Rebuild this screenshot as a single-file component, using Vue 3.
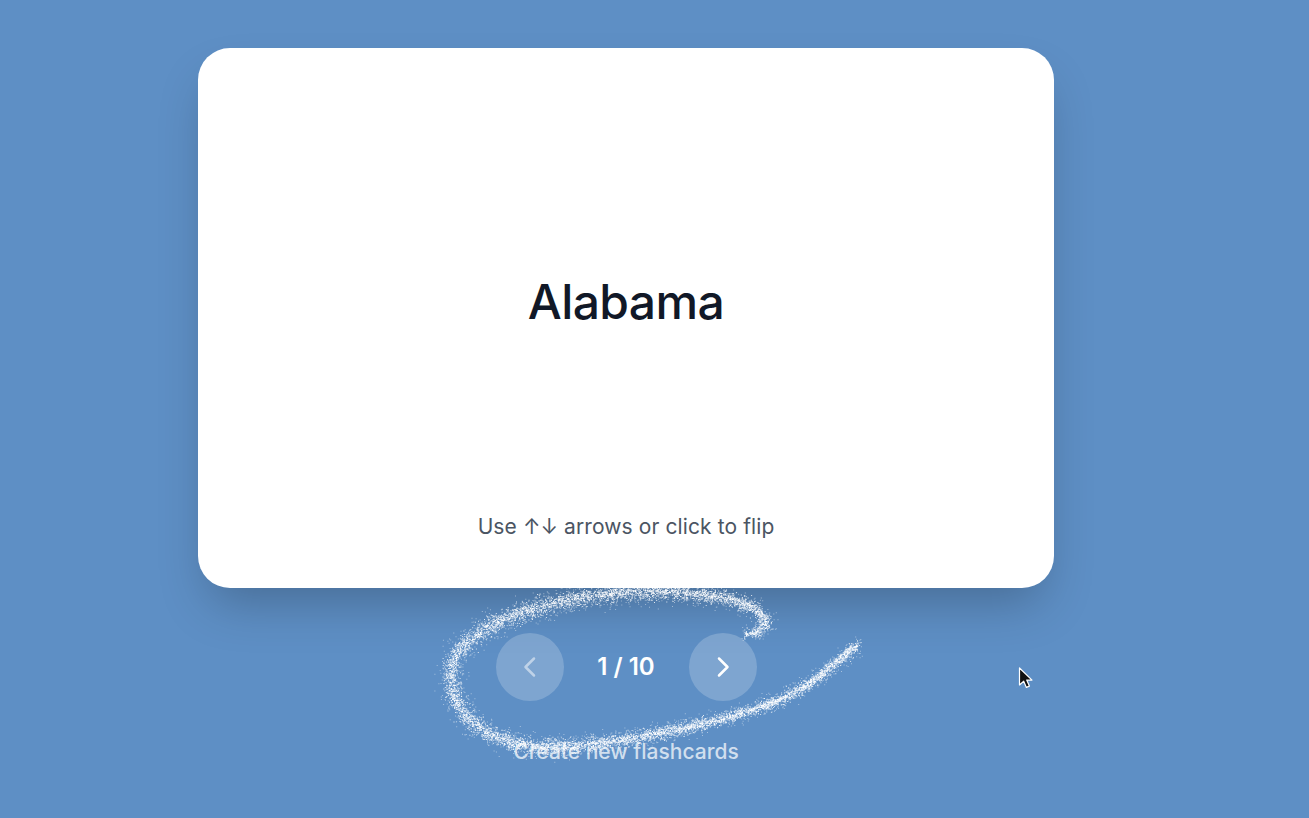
<script setup>
import { computed } from 'vue'

const anchors = [
  [747, 634], [760, 629], [765, 621], [750, 606], [713, 596], [663, 591], [613, 593],
  [563, 601], [513, 615], [480, 632], [460, 649], [451, 672], [456, 699], [470, 720],
  [499, 738], [540, 746], [590, 744], [647, 735], [713, 721], [780, 699], [820, 675], [856, 645],
]

function buildSpeckle(density, spread) {
  let seed = 12345
  const rnd = () => {
    seed = (seed * 1664525 + 1013904223) >>> 0
    return seed / 4294967296
  }
  const gauss = () => (rnd() + rnd() + rnd() - 1.5) / 1.5
  const at = (i) => anchors[Math.max(0, Math.min(anchors.length - 1, i))]
  let d = ''
  for (let i = 0; i < anchors.length - 1; i++) {
    const [p0, p1, p2, p3] = [at(i - 1), at(i), at(i + 1), at(i + 2)]
    const len = Math.hypot(p2[0] - p1[0], p2[1] - p1[1])
    const count = Math.round(len * density)
    for (let n = 0; n < count; n++) {
      const t = rnd()
      const c = (k) =>
        0.5 * (2 * p1[k] + (p2[k] - p0[k]) * t +
          (2 * p0[k] - 5 * p1[k] + 4 * p2[k] - p3[k]) * t * t +
          (3 * p1[k] - p0[k] - 3 * p2[k] + p3[k]) * t * t * t)
      const progress = (i + t) / (anchors.length - 1)
      const taper = 0.75 + 0.5 * Math.sin(Math.min(1, progress * 1.1) * Math.PI)
      const x = c(0) + gauss() * spread * taper
      const y = c(1) + gauss() * spread * taper
      d += `M${x.toFixed(1)} ${y.toFixed(1)}h1v1h-1z`
    }
  }
  return d
}

const speckleBright = computed(() => buildSpeckle(2, 6))
const speckleCore = computed(() => buildSpeckle(6, 11))
const speckleHaze = computed(() => buildSpeckle(4, 17))
</script>

<template>
  <main class="page">
    <section class="card">
      <div class="face">
        <h1 class="word">Alabama</h1>
      </div>
      <p class="hint">Use ↑↓ arrows or click to flip</p>
    </section>

    <div class="controls">
      <button class="nav nav-off" type="button" aria-label="Previous">
        <svg width="24" height="24" viewBox="0 0 24 24" fill="none" stroke="currentColor" stroke-width="2.5" stroke-linecap="round" stroke-linejoin="round"><path d="M16 3.5L7.5 12l8.5 8.5" /></svg>
      </button>
      <span class="count">1 / 10</span>
      <button class="nav" type="button" aria-label="Next">
        <svg width="24" height="24" viewBox="0 0 24 24" fill="none" stroke="currentColor" stroke-width="2.5" stroke-linecap="round" stroke-linejoin="round"><path d="M8 3.5l8.5 8.5L8 20.5" /></svg>
      </button>
    </div>

    <a class="create">Create new flashcards</a>

    <svg class="scribble" width="1309" height="818" viewBox="0 0 1309 818" aria-hidden="true">
      <path :d="speckleHaze" fill="#fff" fill-opacity="0.45" />
      <path :d="speckleCore" fill="#fff" fill-opacity="0.8" />
      <path :d="speckleBright" fill="#fff" />
    </svg>

    <svg class="cursor" width="16" height="24" viewBox="0 0 16 24" aria-hidden="true">
      <path d="M1.5 1v17l4.2-3.8 2.7 6.2 3-1.3-2.7-6H14z" fill="#111" stroke="#fff" stroke-width="1.2" stroke-linejoin="round" />
    </svg>
  </main>
</template>

<style scoped>
.page {
  position: relative;
  box-sizing: border-box;
  width: 1309px;
  height: 818px;
  overflow: hidden;
  padding: 48px 255px 0 198px;
  background: #5e8fc5;
  display: flex;
  flex-direction: column;
  align-items: center;
  font-family: Inter, "Liberation Sans", sans-serif;
}
.card {
  box-sizing: border-box;
  width: 856px;
  height: 540px;
  flex: none;
  display: flex;
  flex-direction: column;
  padding: 40px 0 49px;
  background: #fff;
  border-radius: 32px;
  box-shadow: 0 25px 50px -12px rgba(0, 0, 0, 0.25);
}
.face {
  flex: 1;
  display: flex;
  align-items: center;
  justify-content: center;
}
.word {
  margin: 0;
  font-size: 48px;
  line-height: 1;
  font-weight: 500;
  letter-spacing: -0.6px;
  color: #111827;
}
.hint {
  margin: 0;
  font-size: 21px;
  line-height: 24px;
  letter-spacing: 0.1px;
  text-align: center;
  color: #4b5563;
}
.controls {
  margin-top: 45px;
  display: flex;
  align-items: center;
  gap: 32px;
}
.nav {
  width: 68px;
  height: 68px;
  padding: 0;
  border: 0;
  border-radius: 50%;
  display: flex;
  align-items: center;
  justify-content: center;
  background: rgba(255, 255, 255, 0.2);
  color: #fff;
}
.nav-off {
  color: rgba(255, 255, 255, 0.5);
}
.count {
  min-width: 61px;
  font-size: 24px;
  line-height: 28px;
  font-weight: 600;
  text-align: center;
  color: #fff;
}
.create {
  margin-top: 37px;
  font-size: 21px;
  line-height: 28px;
  font-weight: 500;
  color: rgba(255, 255, 255, 0.72);
}
.scribble {
  position: absolute;
  left: 0;
  top: 0;
  pointer-events: none;
}
.cursor {
  position: absolute;
  left: 1018px;
  top: 667px;
}
</style>
